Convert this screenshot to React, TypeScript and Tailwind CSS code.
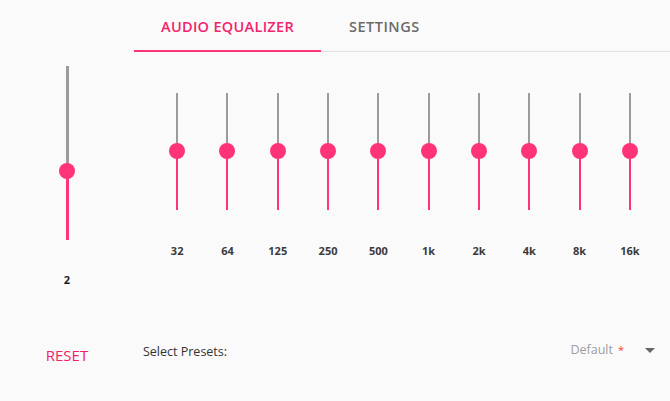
import React from "react";

const bands = ["32", "64", "125", "250", "500", "1k", "2k", "4k", "8k", "16k"];

function EqSlider() {
  return (
    <div className="relative flex h-[117px] w-4 flex-col items-center">
      <div className="h-[58px] w-[2px] bg-[#9b9b9b]" />
      <div className="w-[2px] flex-1 bg-[#ff3378]" />
      <div className="absolute left-0 top-[50px] h-4 w-4 rounded-full bg-[#ff3378]" />
    </div>
  );
}

export default function App() {
  return (
    <div
      className="flex h-[401px] w-[670px] bg-[#fafafa] text-[#333]"
      style={{ fontFamily: '"Open Sans", "Noto Sans", sans-serif' }}
    >
      {/* left column */}
      <div className="flex w-[134px] shrink-0 flex-col items-center">
        <div className="relative mt-[66px] flex h-[174px] w-4 flex-col items-center">
          <div className="h-[105px] w-[3px] bg-[#9b9b9b]" />
          <div className="w-[3px] flex-1 bg-[#ff3378]" />
          <div className="absolute left-0 top-[97px] h-4 w-4 rounded-full bg-[#ff3378]" />
        </div>
        <div className="mt-[33px] text-[11px] font-bold leading-[14px] text-[#1c1c2a]">2</div>
        <button className="mt-[58px] text-[15px] leading-[20px] text-[#f2206a]">RESET</button>
      </div>

      {/* right column */}
      <div className="flex flex-1 flex-col">
        <div className="flex h-[52px] border-b border-[#e0e0e0]">
          <div className="relative flex items-center px-[27px] pt-[3px] text-[14.5px] font-semibold tracking-[0.3px] text-[#f2246c]">
            AUDIO EQUALIZER
            <div className="absolute -bottom-px left-0 right-0 h-[2px] bg-[#ff3378]" />
          </div>
          <div className="flex items-center px-[28px] pt-[3px] text-[14.5px] font-semibold tracking-[0.5px] text-[#6b6b6b]">
            SETTINGS
          </div>
        </div>

        <div className="mt-[41px] grid grid-cols-10 pl-[18px] pr-[15px]">
          {bands.map((b) => (
            <div key={b} className="flex flex-col items-center">
              <EqSlider />
              <div className="mt-[34px] text-[11px] font-bold leading-[14px] text-[#3a3a3a]">{b}</div>
            </div>
          ))}
        </div>

        <div className="mt-[82px] flex items-center pl-[9px] pr-[15px]">
          <div className="mt-[4px] text-[12.5px] leading-[16px] text-[#333]">Select Presets:</div>
          <div className="ml-auto flex items-center">
            <span className="text-[12.5px] leading-[16px] text-[#9e9e9e]">Default</span>
            <span className="ml-[5px] text-[11px] leading-[16px] text-[#f44336]">*</span>
            <svg className="ml-[21px]" width="10" height="5" viewBox="0 0 10 5">
              <path d="M0 0 L10 0 L5 5 Z" fill="#666" />
            </svg>
          </div>
        </div>
      </div>
    </div>
  );
}
